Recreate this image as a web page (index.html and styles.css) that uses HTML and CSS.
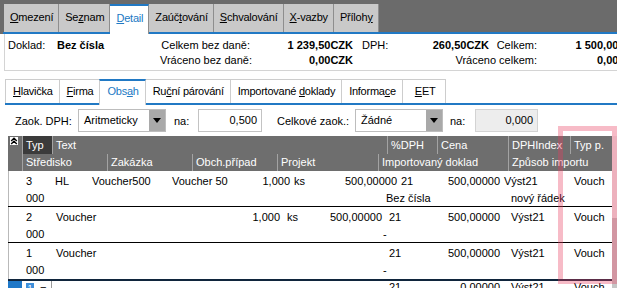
FILE: index.html
```html
<!DOCTYPE html>
<html lang="cs">
<head>
  <meta charset="UTF-8">
  <title>Doklad - Detail</title>
  <link rel="stylesheet" href="styles.css">
</head>
<body>

<div class="topbar">
  <div class="tabs">
    <div class="tab"><u>O</u>mezení</div>
    <div class="tab">Se<u>z</u>nam</div>
    <div class="tab active"><u>D</u>etail</div>
    <div class="tab">Zaúč<u>t</u>ování</div>
    <div class="tab"><u>S</u>chvalování</div>
    <div class="tab"><u>X</u>-vazby</div>
    <div class="tab">Příloh<u>y</u></div>
  </div>
</div>

<div class="summary">
  <span class="lbl">Doklad:</span>
  <b>Bez čísla</b>
  <span class="r">Celkem bez daně:</span>
  <b class="r">1 239,50CZK</b>
  <span class="dph">DPH:</span>
  <b class="r">260,50CZK</b>
  <span class="r">Celkem:</span>
  <b class="r">1 500,00CZK</b>

  <span></span>
  <span></span>
  <span class="r">Vráceno bez daně:</span>
  <b class="r">0,00CZK</b>
  <span class="r span3">Vráceno celkem:</span>
  <b class="r">0,00CZK</b>
</div>

<div class="subtabs">
  <div class="subtab"><u>H</u>lavička</div>
  <div class="subtab"><u>F</u>irma</div>
  <div class="subtab active">Obs<u>a</u>h</div>
  <div class="subtab">Ru<u>č</u>ní párování</div>
  <div class="subtab">Importované <u>d</u>oklady</div>
  <div class="subtab">Informa<u>c</u>e</div>
  <div class="subtab eet"><u>E</u>ET</div>
</div>

<div class="filters">
  <span>Zaok. DPH:</span>
  <div class="combo"><span>Aritmeticky</span><i></i></div>
  <span class="gap">na:</span>
  <div class="field">0,500</div>
  <span class="gap2">Celkové zaok.:</span>
  <div class="combo"><span>Žádné</span><i></i></div>
  <span class="gap3">na:</span>
  <div class="field off">0,000</div>
</div>

<div class="gridbox">
  <div class="grid">
    <div class="ghead">
      <div class="gutter">
        <svg width="8" height="8" viewBox="0 0 8 8">
          <rect width="8" height="8" fill="#fff"/>
          <path d="M1.2 4 L4 1.3 L6.8 4 M1.2 7 L4 4.3 L6.8 7" stroke="#000" stroke-width="1.4" fill="none"/>
        </svg>
      </div>
      <div class="hrows">
        <div class="hrow h1">
          <div class="hc typ">Typ</div>
          <div class="hc">Text</div>
          <div class="hc">%DPH</div>
          <div class="hc">Cena</div>
          <div class="hc">DPHIndex</div>
          <div class="hc">Typ p.</div>
        </div>
        <div class="hrow h2">
          <div class="hc">Středisko</div>
          <div class="hc">Zakázka</div>
          <div class="hc">Obch.případ</div>
          <div class="hc">Projekt</div>
          <div class="hc">Importovaný doklad</div>
          <div class="hc">Způsob importu</div>
        </div>
      </div>
    </div>

    <div class="grow">
      <div class="gutter"></div>
      <div class="cells">
        <div class="line la">
          <span>3</span><span>HL</span><span>Voucher500</span><span>Voucher 500</span>
          <span class="n">1,000</span><span>ks</span><span class="n">500,00000</span><span>21</span>
          <span class="n">500,00000</span><span>Výst21</span><span>Vouch</span>
        </div>
        <div class="line lc">
          <span>000</span><span></span><span class="w">Bez čísla</span><span>nový řádek</span>
        </div>
      </div>
    </div>

    <div class="grow">
      <div class="gutter"></div>
      <div class="cells">
        <div class="line lb">
          <span>2</span><span>Voucher</span><span class="n">1,000</span><span class="w">ks</span>
          <span class="n">500,00000</span><span class="w">21</span><span class="n">500,00000</span>
          <span class="x">Výst21</span><span>Vouch</span>
        </div>
        <div class="line lc">
          <span>000</span><span></span><span>-</span><span></span>
        </div>
      </div>
    </div>

    <div class="grow open">
      <div class="gutter"></div>
      <div class="cells">
        <div class="line lb">
          <span>1</span><span>Voucher</span><span class="n"></span><span class="w"></span>
          <span class="n"></span><span class="w">21</span><span class="n">500,00000</span>
          <span class="x">Výst21</span><span>Vouch</span>
        </div>
        <div class="line lc">
          <span>000</span><span></span><span>-</span><span></span>
        </div>
      </div>
    </div>

    <div class="grow current">
      <div class="gutter"></div>
      <div class="cells">
        <div class="line lb">
          <span class="edit"><b class="rn">1</b><em>−</em></span><span></span><span class="n"></span><span class="w"></span>
          <span class="n"></span><span class="w">21</span><span class="n">0,00000</span>
          <span class="x">Výst21</span><span>Vouch</span>
        </div>
      </div>
    </div>
  </div>
  <div class="vscroll"><div class="thumb"></div></div>
</div>

<div class="mark"></div>

</body>
</html>
```

FILE: styles.css
```css
* {
  box-sizing: border-box;
}
body {
  margin: 0;
  width: 617px;
  height: 288px;
  overflow: hidden;
  position: relative;
  background: #fff;
  color: #000;
  font-family: "Liberation Sans", Arial, sans-serif;
  font-size: 11px;
}

/* top tabs */
.topbar {
  background: #6b6b6b;
  padding: 4px 0 0 3px;
}
.tabs {
  display: flex;
  align-items: flex-start;
  padding-left: 1px;
  border-bottom: 2px solid #2179c4;
}
.tab {
  height: 28px;
  line-height: 26px;
  padding: 0 5px 0 6px;
  letter-spacing: -0.2px;
  background: #c9c9c9;
  border-right: 1px solid #8e8e8e;
  white-space: nowrap;
}
.tab.active {
  height: 30px;
  margin-bottom: -2px;
  line-height: 24px;
  background: #fff;
  color: #2179c4;
  border-top: 2px solid #2179c4;
}

/* summary panel */
.summary {
  width: 660px;
  margin-left: 4px;
  padding: 4px 0 2px;
  border: 1px solid #d4d4d4;
  border-top: none;
  display: grid;
  grid-template-columns: 52px 103px 90px 103px 67px 69px 48px 104px;
  grid-auto-rows: 15px;
  line-height: 15px;
  white-space: nowrap;
}
.summary .lbl {
  padding-left: 3px;
}
.summary .r {
  text-align: right;
}
.summary .dph {
  padding-left: 9px;
}
.summary .span3 {
  grid-column: span 3;
}

/* sub tabs */
.subtabs {
  display: flex;
  align-items: flex-start;
  margin: 8px 0 0 5px;
  border-bottom: 2px solid #2179c4;
}
.subtab {
  height: 24px;
  line-height: 22px;
  padding: 0 6px 0 7px;
  letter-spacing: -0.25px;
  border: 1px solid #cdcdcd;
  border-bottom: none;
  margin-right: -1px;
  white-space: nowrap;
}
.subtab.active {
  height: 26px;
  margin-bottom: -2px;
  line-height: 21px;
  color: #2179c4;
  background: #fff;
  border-top: 2px solid #2179c4;
  position: relative;
}
.subtab.eet {
  padding: 0 10px 0 12px;
}

/* filter row */
.filters {
  display: grid;
  grid-template-columns: 63px 88px 32px 64px 93px 88px 32px 63px;
  align-items: center;
  height: 23px;
  margin-top: 4px;
  padding-left: 15px;
  white-space: nowrap;
}
.filters .gap {
  padding-left: 8px;
}
.filters .gap2 {
  padding-left: 15px;
}
.filters .gap3 {
  padding-left: 7px;
}
.combo {
  display: flex;
  height: 23px;
  border: 1px solid #bdbdbd;
}
.combo span {
  flex: 1;
  padding-left: 5px;
  line-height: 20px;
}
.combo i {
  width: 16px;
  background: #a9a9a9;
  display: flex;
  align-items: center;
  justify-content: center;
}
.combo i::after {
  content: "";
  border-left: 4px solid transparent;
  border-right: 4px solid transparent;
  border-top: 5px solid #000;
}
.field {
  height: 23px;
  line-height: 21px;
  padding-right: 4px;
  text-align: right;
  border: 1px solid #c3c3c3;
}
.field.off {
  background: #ededed;
  border-color: #d3d3d3;
}

/* grid */
.gridbox {
  display: flex;
  margin: 4px 0 0 8px;
}
.grid {
  width: 604px;
  flex: none;
}
.gutter {
  width: 14px;
  flex: none;
}
.ghead {
  display: flex;
  background: #6e6e6e;
  color: #fff;
}
.ghead .gutter {
  padding: 1px 0 0 2px;
}
.ghead svg {
  display: block;
}
.hrows {
  flex: 1;
}
.hrow {
  display: grid;
  white-space: nowrap;
}
.h1 {
  grid-template-columns: 30px 335px 50px 71px 62px 42px;
  height: 18px;
  line-height: 18px;
}
.h2 {
  grid-template-columns: 85px 85px 85px 101px 130px 104px;
  height: 17px;
  line-height: 17px;
}
.hc {
  padding-left: 3px;
  border-left: 1px solid #a3a3a3;
  overflow: hidden;
}
.hc.typ {
  background: #3b3b3b;
}

.grow {
  display: flex;
  height: 36px;
  border-bottom: 1px solid #000;
}
.grow .gutter {
  border-left: 1px solid #b9b9b9;
}
.grow.open {
  border-bottom: none;
}
.grow.current {
  border-top: 2px solid #10253c;
}
.grow.current .gutter {
  background: #1f78c8;
  border-left: none;
}
.cells {
  flex: 1;
  padding-top: 2px;
}
.grow.current .cells {
  padding-top: 0;
}
.line {
  display: grid;
  height: 17px;
  line-height: 17px;
  white-space: nowrap;
}
.grow.current .line {
  line-height: 13px;
}
.line > span {
  padding-left: 4px;
  overflow: hidden;
}
.line > .n {
  padding-left: 0;
  display: flex;
  justify-content: flex-end;
  overflow: visible;
}
.line > .w {
  padding-left: 7px;
}
.line > .x {
  padding-left: 11px;
}
.la {
  grid-template-columns: 29px 37px 80px 60px 62px 50px 57px 53px 50px 70px 42px;
}
.lb {
  grid-template-columns: 30px 170px 58px 50px 52px 68px 50px 70px 42px;
}
.lc {
  grid-template-columns: 30px 327px 128px 105px;
}
.line > .edit {
  display: flex;
  align-items: flex-start;
  border-right: 1px solid #9a9a9a;
}
.rn {
  width: 8px;
  height: 10px;
  margin-top: 2px;
  background: #3d8fdb;
  color: #fff;
  font-size: 9px;
  line-height: 10px;
  text-align: center;
  font-weight: normal;
}
.edit em {
  font-style: normal;
  margin-left: 6px;
}

.vscroll {
  width: 5px;
  flex: none;
  background: #f0f0f0;
}
.thumb {
  margin-top: 82px;
  height: 80px;
  background: #c6c6c6;
}

/* pink highlight frame over the last column */
.mark {
  position: absolute;
  left: 558px;
  top: 126px;
  width: 59px;
  height: 158px;
  border: 5px solid rgba(232, 60, 95, 0.35);
  pointer-events: none;
}
```
